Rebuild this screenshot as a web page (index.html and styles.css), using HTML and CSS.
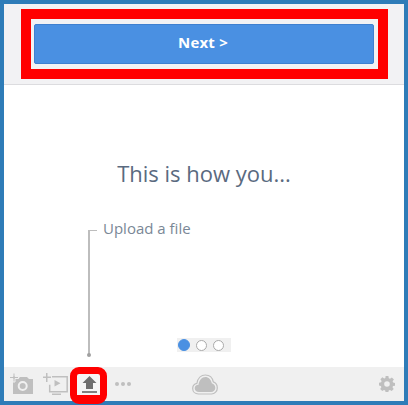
FILE: index.html
```html
<!DOCTYPE html>
<html lang="en">
<head>
  <meta charset="UTF-8" />
  <title>Tutorial</title>
  <link rel="stylesheet" href="styles.css">
</head>
<body>
  <div class="frame">
    <header class="top">
      <div class="highlight">
        <button class="next">Next &gt;</button>
      </div>
    </header>

    <main class="intro">
      <h1>This is how you...</h1>
      <div class="callout">Upload a file</div>
      <div class="pager">
        <span class="dot on"></span>
        <span class="dot"></span>
        <span class="dot"></span>
      </div>
      <!-- leader line from the label down to the upload icon -->
      <div class="leader"></div>
    </main>

    <footer class="toolbar">
      <svg class="camera" width="23" height="22" viewBox="0 0 23 22">
        <path fill="#bfbfbf" d="M3 6h5l2-2h7l2 2h4v15H3z"/>
        <circle cx="12.700" cy="13" r="4" fill="none" stroke="#f0f0f0" stroke-width="2"/>
        <path fill="#bfbfbf" stroke="#f0f0f0" stroke-width="1" d="M3 0h2v3.500h3.500v2H5V9H3V5.500H-.5v-2H3z"/>
      </svg>
      <svg class="screen" width="25" height="22" viewBox="0 0 25 22">
        <path fill="#bfbfbf" d="M3 0h1.500v3.500H8V5H4.500v4H3V5H0V3.500h3z"/>
        <path fill="none" stroke="#bfbfbf" stroke-width="1.500" d="M9 3.700h15.200v15H6.700v-7"/>
        <path fill="#bfbfbf" d="M11.500 7l6 3.200-6 3.200zM9 20.500h9V22H9z"/>
      </svg>
      <div class="upload">
        <svg width="15" height="17" viewBox="0 0 15 17">
          <path fill="#6e6e6e" d="M7.500 0l7 7h-3.500v6H4V7H.5z"/>
          <path fill="#808080" d="M0 15h15v2H0z"/>
        </svg>
      </div>
      <span class="more"><i></i><i></i><i></i></span>
      <svg class="cloud" width="26" height="21" viewBox="0 0 26 21">
        <path fill="none" stroke="#bfbfbf" stroke-width="1.200" d="M6.500 20C3 20 .7 17.500.7 14.500c0-2.600 1.700-4.700 4.200-5.200C5.800 4.200 9.200 1 13.300 1c4 0 7.200 2.800 8 6.900 2.400.8 4 3.300 4 6 0 3.300-2.500 6.100-5.800 6.100z"/>
        <path fill="#bfbfbf" d="M7 18c-2.500 0-4.300-1.600-4.300-3.800 0-2 1.500-3.400 3.800-3.500C7.200 6 10 3 13.300 3c3.200 0 5.800 2.500 6.500 6.300 2.200.5 3.500 2.500 3.500 4.700 0 2.300-1.800 4-4.300 4z"/>
      </svg>
      <svg class="gear" width="16" height="16" viewBox="0 0 16 16">
        <path fill="#bfbfbf" fill-rule="evenodd" d="M6.600 0h2.800l.4 2.200 1.200.5 1.900-1.300 2 2-1.300 1.900.5 1.200 2 .4v2.800l-2.100.4-.5 1.200 1.200 1.800-2 2-1.800-1.200-1.200.5-.4 2.100H6.600l-.4-2.100-1.200-.5-1.800 1.200-2-2 1.200-1.800-.5-1.200L0 9.500V6.700l2.100-.4.500-1.200-1.200-1.800 2-2 1.800 1.200 1.200-.5zM8 5.200a2.800 2.800 0 1 0 0 5.600 2.800 2.800 0 0 0 0-5.600z"/>
      </svg>
    </footer>
  </div>
</body>
</html>
```

FILE: styles.css
```css
html, body {
  margin: 0;
  height: 100%;
}
body {
  background: #2e7cb8;
  font-family: 'Open Sans', sans-serif;
}
.frame {
  box-sizing: border-box;
  height: 405px;
  margin: 0 4px;
  padding: 4px 0;
  display: flex;
  flex-direction: column;
}
.top {
  height: 81px;
  background: #f2f2f4;
  border-bottom: 1px solid #dcdcdf;
  padding: 5px 16px 0 17px;
  box-sizing: border-box;
  flex: none;
}
.highlight {
  box-sizing: border-box;
  height: 70px;
  border: 10px solid #f00;
  padding: 5px 4px 5px 3px;
}
.next {
  display: block;
  width: 100%;
  height: 40px;
  padding: 0 2px 5px 0;
  background: #4a90e2;
  border: 1px solid #3f80d0;
  border-radius: 2px;
  color: #fff;
  font: bold 15px 'Open Sans', sans-serif;
  letter-spacing: .2px;
}
.intro {
  position: relative;
  flex: 1;
  background: #fff;
  padding-top: 73px;
}
.intro h1 {
  margin: 0;
  font-size: 22px;
  font-weight: 400;
  line-height: 30px;
  color: #5a6a80;
  text-align: center;
}
.callout {
  height: 20px;
  line-height: 20px;
  margin: 30px 0 0 99px;
  font-size: 15px;
  color: #7a8796;
}
.leader {
  position: absolute;
  left: 84px;
  top: 145px;
  width: 2px;
  height: 125px;
  background: #bdbdbd;
}
.leader::before {
  content: "";
  position: absolute;
  left: 0;
  top: 0;
  width: 9px;
  height: 1px;
  background: #bdbdbd;
}
.leader::after {
  content: "";
  position: absolute;
  left: -1px;
  bottom: -2px;
  width: 4px;
  height: 4px;
  border-radius: 50%;
  background: #a0a0a0;
}
.pager {
  box-sizing: border-box;
  display: flex;
  align-items: center;
  gap: 6px;
  width: 54px;
  height: 14px;
  background: #f0f0f0;
  margin: 100px auto 0;
  padding-left: 1px;
}
.dot {
  box-sizing: border-box;
  width: 11px;
  height: 11px;
  border: 1px solid #aaa;
  border-radius: 50%;
  background: #fff;
}
.dot.on {
  width: 12px;
  height: 12px;
  background: #4a90e2;
  border-color: #4a90e2;
}
.toolbar {
  height: 34px;
  flex: none;
  background: #f0f0f0;
  display: flex;
  align-items: center;
  padding-left: 6px;
}
.screen {
  margin-left: 10px;
}
.upload {
  box-sizing: border-box;
  flex: none;
  align-self: flex-start;
  width: 37px;
  height: 37px;
  margin-left: 2px;
  padding-left: 1px;
  border: 7px solid #f00;
  border-bottom-width: 9px;
  border-radius: 9px;
  background: #f5f5f5;
  display: flex;
  align-items: center;
  justify-content: center;
  position: relative;
}
.more {
  display: flex;
  gap: 2px;
  margin-left: 8px;
}
.more i {
  width: 4px;
  height: 4px;
  border-radius: 50%;
  background: #bfbfbf;
}
.cloud {
  margin-left: 61px;
}
.gear {
  margin-left: auto;
  margin-right: 9px;
}
```
